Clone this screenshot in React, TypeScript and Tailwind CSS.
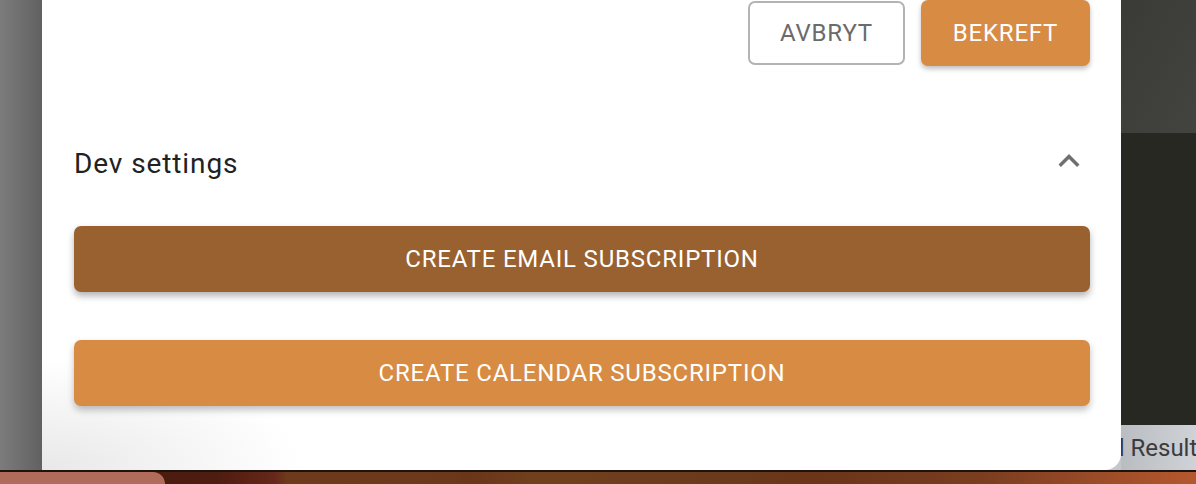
const font = { fontFamily: "Roboto, 'Noto Sans', sans-serif" };

function ExpandLess() {
  return (
    <svg viewBox="0 0 24 24" className="h-[42px] w-[42px] fill-[#6f6f6f]">
      <path d="M12 8l-6 6 1.41 1.41L12 10.83l4.59 4.58L18 14z" />
    </svg>
  );
}

export default function App() {
  return (
    <div className="flex h-[484px] w-[1196px] flex-col overflow-hidden" style={font}>
      <div className="flex h-[470px] bg-[#c4c7cc]">
        <div className="w-[42px] shrink-0 bg-gradient-to-r from-[#7c7c7c] to-[#616161]" />

        <div className="flex w-[1079px] shrink-0 flex-col rounded-br-[16px] bg-white bg-[radial-gradient(ellipse_260px_110px_at_0%_100%,#e8e8e8,#ffffff)] pl-[32px] pr-[31px]">
          <div className="flex justify-end gap-[16px]">
            <button className="mt-[1px] flex h-[64px] w-[157px] items-center justify-center rounded-[7px] border-2 border-[#b3b3b3] text-[24px] tracking-[0.8px] text-[#6b6b6b]">
              AVBRYT
            </button>
            <button className="flex h-[66px] w-[169px] items-center justify-center rounded-[7px] bg-[#d88b42] text-[24px] tracking-[0.8px] text-white shadow-[0_3px_5px_rgba(0,0,0,0.25)]">
              BEKREFT
            </button>
          </div>

          <div className="mt-[66px] flex h-[64px] items-center justify-between">
            <span className="text-[28px] tracking-[0.9px] text-[#222222]">Dev settings</span>
            <div className="-mt-[6px]">
              <ExpandLess />
            </div>
          </div>

          <button className="mt-[30px] flex h-[66px] items-center justify-center rounded-[7px] bg-[#99612f] text-[24px] tracking-[0.8px] text-white shadow-[0_4px_7px_rgba(0,0,0,0.3)]">
            CREATE EMAIL SUBSCRIPTION
          </button>

          <button className="mt-[48px] flex h-[66px] items-center justify-center rounded-[7px] bg-[#d88b42] text-[24px] tracking-[0.8px] text-white shadow-[0_4px_7px_rgba(0,0,0,0.25)]">
            CREATE CALENDAR SUBSCRIPTION
          </button>
        </div>

        <div className="flex min-w-0 flex-1 flex-col">
          <div className="h-[133px] bg-gradient-to-br from-[#3a3b37] to-[#43443f]" />
          <div className="h-[292px] bg-[#282823]" />
          <div className="flex h-[45px] items-center overflow-hidden bg-gradient-to-r from-[#b9bcc1] to-[#cfd2d6]">
            <span className="-ml-[10px] whitespace-nowrap text-[24px] text-[#3b3b3d]">d Result</span>
          </div>
        </div>
      </div>

      <div className="flex h-[14px] border-t-2 border-[#1f120c] bg-[linear-gradient(90deg,#45180d_0%,#4e1c10_18%,#66281a_23%,#6e3a1c_24%,#6c381b_38%,#6a3519_39%,#70401e_45%,#6b3a1c_60%,#6a3519_68%,#7a3d20_82%,#b5582e_100%)]">
        <div className="w-[165px] rounded-tr-[12px] bg-[#b06b5b]" />
      </div>
    </div>
  );
}
